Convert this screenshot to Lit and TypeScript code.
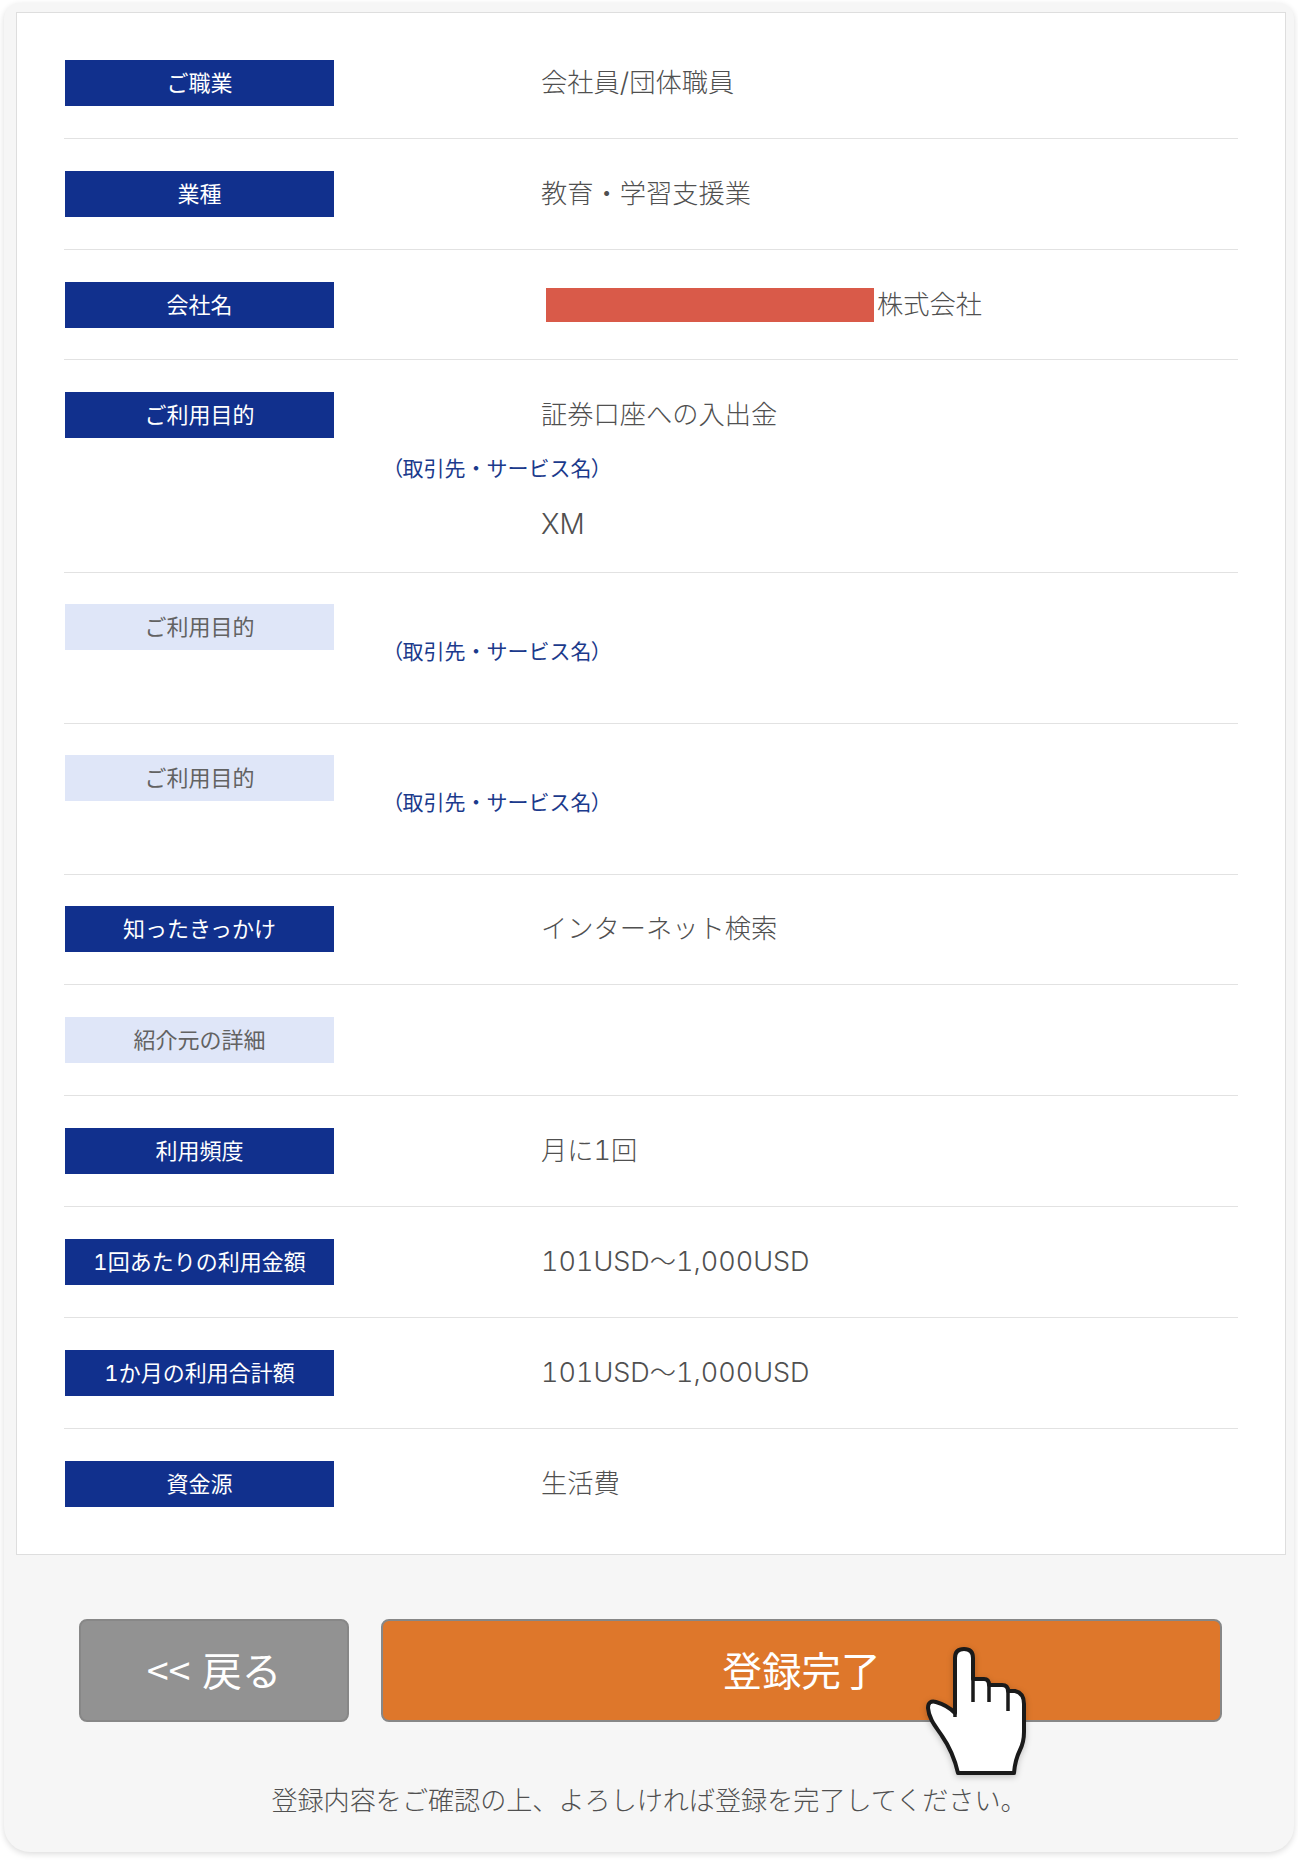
import { LitElement, html, css, nothing } from "lit";
import { customElement } from "lit/decorators.js";

interface Row { label: string; value?: string; off?: boolean; kind?: "red" | "purpose" | "empty"; mod?: string; }

const rows: Row[] = [
  { label: "ご職業", value: "会社員/団体職員" },
  { label: "業種", value: "教育・学習支援業" },
  { label: "会社名", value: "株式会社", kind: "red", mod: "tight" },
  { label: "ご利用目的", value: "証券口座への入出金", kind: "purpose" },
  { label: "ご利用目的", off: true, kind: "empty" },
  { label: "ご利用目的", off: true, kind: "empty" },
  { label: "知ったきっかけ", value: "インターネット検索", mod: "raised" },
  { label: "紹介元の詳細", off: true },
  { label: "利用頻度", value: "月に1回" },
  { label: "1回あたりの利用金額", value: "101USD〜1,000USD" },
  { label: "1か月の利用合計額", value: "101USD〜1,000USD" },
  { label: "資金源", value: "生活費" },
];

const latin = (text: string) =>
  text.split(/([0-9A-Za-z,\/]+)/).map((part, i) => (i % 2 ? html`<span class="latin">${part}</span>` : part));
const hasLatin = (text: string) => /[0-9A-Za-z\/]/.test(text);

@customElement("app-root")
export class AppRoot extends LitElement {
  static styles = css`
    :host {
      display: block;
      width: 1298px;
      height: 1862px;
      background: #fff;
      font-family: "Noto Sans CJK JP", "Liberation Sans", sans-serif;
      font-weight: 300;
      color: #505050;
      padding: 3px 4px 0;
      box-sizing: border-box;
    }
    .panel {
      width: 1290px;
      height: 1849px;
      box-sizing: border-box;
      background: #f6f6f6;
      border-radius: 16px 16px 26px 26px;
      box-shadow: 0 2px 6px rgba(0, 0, 0, 0.14);
      padding: 9px 12px 0;
      position: relative;
    }
    .card {
      background: #fff;
      border: 1px solid #dedede;
      box-sizing: border-box;
      width: 1270px;
      height: 1543px;
      padding: 15px 47px 0 47px;
    }
    .row {
      display: flex;
      align-items: flex-start;
      padding: 32px 0;
      border-bottom: 1px solid #e2e2e2;
    }
    .row:last-child { border-bottom: none; }
    .row.tight { padding-bottom: 31px; }
    .row.raised { padding-top: 31px; }
    .row.purpose { padding-bottom: 25px; }
    .row.empty { padding: 31px 0 33px; }
    .label {
      flex: none;
      width: 269px;
      height: 46px;
      margin-left: 1px;
      background: #11308d;
      color: #fff;
      font-size: 22px;
      font-weight: 400;
      line-height: 42px;
      text-align: center;
    }
    .label.off { background: #dfe6f8; color: #626262; }
    .label .latin { font-size: 22px; font-weight: 400; }
    .body { display: flex; flex-direction: column; }
    .value {
      margin-left: 207px;
      font-size: 26.25px;
      line-height: 42px;
      height: 46px;
      padding-bottom: 4px;
      box-sizing: border-box;
      white-space: nowrap;
      display: flex;
      align-items: center;
    }
    .value.mixed { padding-bottom: 2px; }
    .latin {
      font-family: "Inter", "Liberation Sans", sans-serif;
      font-weight: 300;
      font-size: 27px;
      font-feature-settings: "tnum";
    }
    .sub {
      margin-left: 58px;
      margin-top: 11px;
      color: #1b3a8c;
      font-size: 21px;
      font-weight: 400;
      line-height: 36px;
      white-space: nowrap;
    }
    .paren { font-feature-settings: "palt"; }
    .sub + .value { margin-top: 16px; }
    .sub + .value .latin { font-size: 28px; }
    .empty .sub { margin-top: 28px; margin-bottom: 22px; }
    .redact {
      display: block;
      width: 328px;
      height: 34px;
      margin: 4px 3px 0 5px;
      background: #d95a49;
    }
    .actions {
      display: flex;
      gap: 32px;
      padding: 64px 0 0 63px;
    }
    .btn {
      height: 103px;
      box-sizing: border-box;
      border: 2px solid #878787;
      border-radius: 8px;
      color: #fff;
      font-family: inherit;
      font-weight: 400;
      font-size: 39.5px;
      word-spacing: 3px;
      padding: 0 0 4px;
    }
    .back { width: 270px; background: #929292; }
    .go { width: 841px; background: #de772b; }
    .note {
      margin: 59px 0 0;
      text-align: center;
      font-size: 26.1px;
      line-height: 36px;
    }
    .hand {
      position: absolute;
      left: 916px;
      top: 1637px;
      width: 115px;
      height: 145px;
      filter: drop-shadow(0 2px 3px rgba(0, 0, 0, 0.22));
    }
  `;

  private row(r: Row) {
    const cls = ["row", r.kind ?? "", r.mod ?? ""].join(" ");
    return html`<div class=${cls}>
      <div class="label ${r.off ? "off" : ""}">${latin(r.label)}</div>
      <div class="body">
        ${r.value
          ? html`<div class="value ${hasLatin(r.value) ? "mixed" : ""}">${r.kind === "red" ? html`<span class="redact"></span>` : nothing}<span>${latin(r.value)}</span></div>`
          : nothing}
        ${r.kind === "purpose" || r.kind === "empty"
          ? html`<div class="sub"><span class="paren">（</span>取引先・サービス名<span class="paren">）</span></div>`
          : nothing}
        ${r.kind === "purpose" ? html`<div class="value mixed"><span>${latin("XM")}</span></div>` : nothing}
      </div>
    </div>`;
  }

  render() {
    return html`<div class="panel">
      <div class="card">${rows.map((r) => this.row(r))}</div>
      <div class="actions">
        <button class="btn back">&lt;&lt; 戻る</button>
        <button class="btn go">登録完了</button>
      </div>
      <p class="note">登録内容をご確認の上、よろしければ登録を完了してください。</p>
      <svg class="hand" viewBox="0 0 115 145" aria-hidden="true">
        <path
          d="M35 70 V18 Q35 9 44 9 Q53 9 53 18 V39 H64 Q69 39 69 45 H82 Q88 45 88 51 H95 Q104 53 104 64 V92 Q104 102 100 110 Q95 120 94 133 H38 C35 120 29 106 22 96 C17 88 9 80 8 68 Q8 60 16 62 Q27 65 35 73 Z"
          fill="#fff"
          stroke="#1a1a1a"
          stroke-width="4"
          stroke-linejoin="round"
        />
        <path d="M35 70 V77 M53 39 V62 M69 45 V62 M88 51 V71" fill="none" stroke="#1a1a1a" stroke-width="3.5" />
      </svg>
    </div>`;
  }
}
